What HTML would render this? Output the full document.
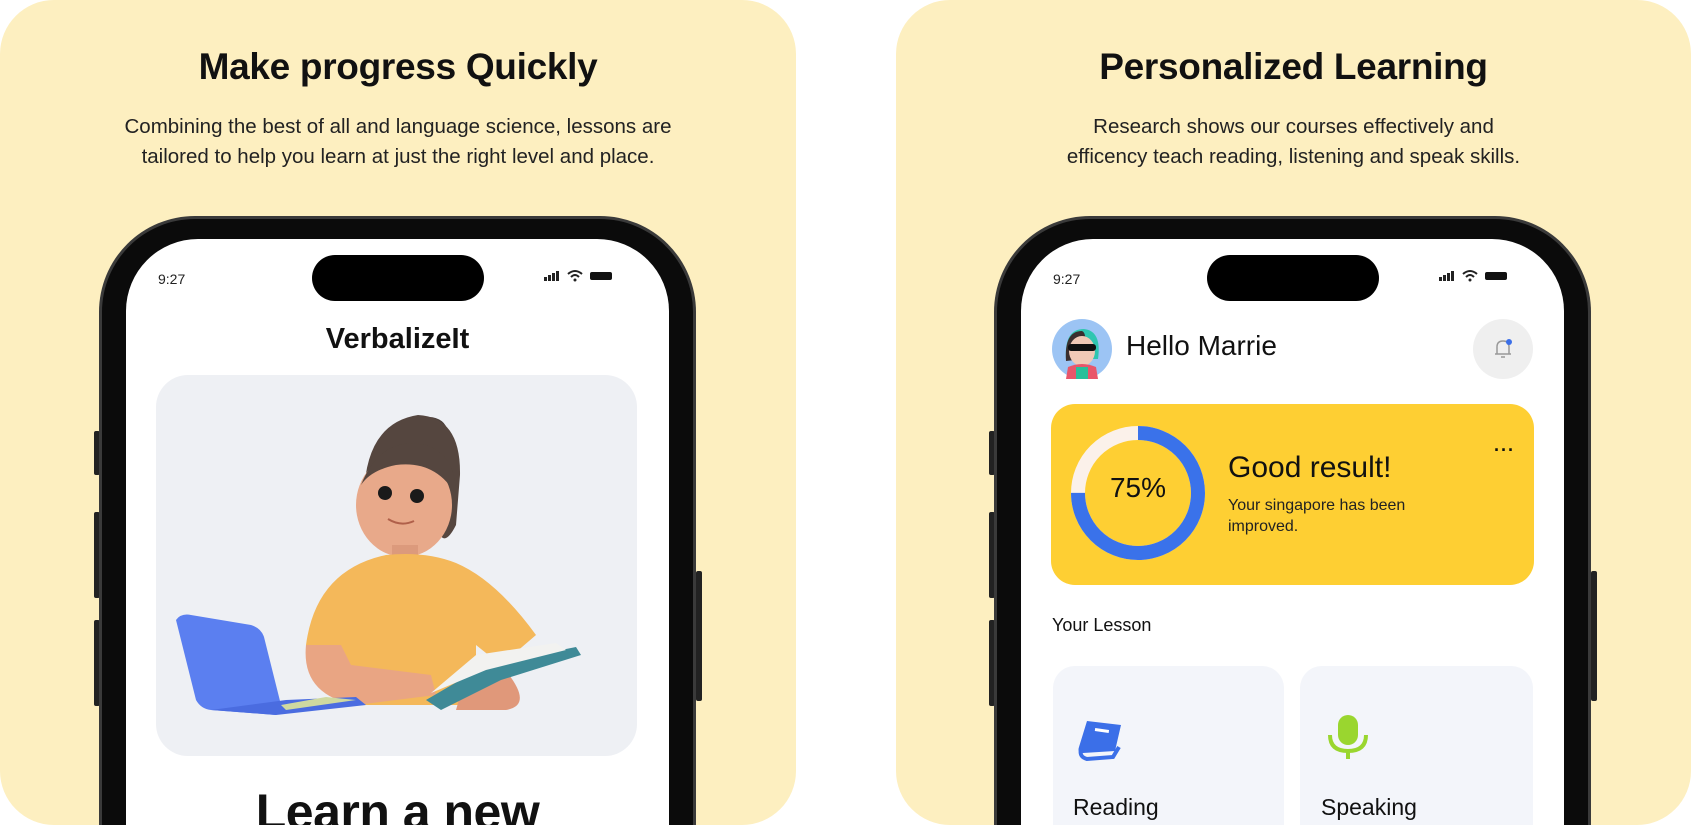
<!DOCTYPE html>
<html style="width:1691px;height:825px;overflow:hidden"><head><meta charset="utf-8"><style>
*{margin:0;padding:0;box-sizing:border-box}
body{width:1691px;height:825px;background:#fff;position:relative;overflow:hidden;font-family:"Liberation Sans",sans-serif;color:#111}
.abs{position:absolute}
.card{position:absolute;top:0;height:825px;background:#fdefc0;border-radius:54px;overflow:hidden}
.title{position:absolute;width:100%;text-align:center;top:46px;font-size:37px;font-weight:bold;letter-spacing:-0.3px}
.sub{position:absolute;width:100%;text-align:center;top:112px;font-size:20.5px;line-height:30px;color:#222}
.phone{position:absolute;top:216px;width:597px;height:609px;background:#0b0b0b;border-radius:96px 96px 0 0;border:3px solid #3a3a3a;border-bottom:none;overflow:hidden}
.screen{position:absolute;left:24px;top:20px;width:543px;height:586px;background:#fff;border-radius:72px 72px 0 0;overflow:hidden}
.island{position:absolute;left:186px;top:16px;width:172px;height:46px;background:#000;border-radius:23px}
.time{position:absolute;left:32px;top:32px;font-size:14px;color:#222}
.btn{position:absolute;background:#222;width:6px;border-radius:2px}
</style></head><body>

<div class="card" style="left:0;width:796px">
  <div class="title">Make progress Quickly</div>
  <div class="sub">Combining the best of all and language science, lessons are<br>tailored to help you learn at just the right level and place.</div>
  <div class="btn" style="left:94px;top:431px;height:44px"></div>
  <div class="btn" style="left:94px;top:512px;height:86px"></div>
  <div class="btn" style="left:94px;top:620px;height:86px"></div>
  <div class="btn" style="left:696px;top:571px;height:130px"></div>
  <div class="phone" style="left:99px">
    <div class="screen">
      <div class="island"></div>
      <div class="time">9:27</div>
      <svg class="abs" style="left:418px;top:30px" width="70" height="14"><rect x="0" y="8" width="3" height="4" fill="#222"/><rect x="4" y="6" width="3" height="6" fill="#222"/><rect x="8" y="4" width="3" height="8" fill="#222"/><rect x="12" y="2" width="3" height="10" fill="#222"/><path d="M24 5 Q31 -1 38 5 M27 8 Q31 4 35 8" stroke="#222" stroke-width="2" fill="none"/><circle cx="31" cy="11" r="1.5" fill="#222"/><rect x="46" y="3" width="22" height="8" rx="2" fill="#111"/></svg>
      <div class="abs" style="left:0;width:100%;text-align:center;top:84px;font-size:29px;font-weight:bold">VerbalizeIt</div>
      <div class="abs" style="left:30px;top:136px;width:481px;height:381px;background:#eef0f4;border-radius:32px;overflow:hidden">
        <svg width="481" height="381">
          <ellipse cx="273" cy="56" rx="18" ry="14" fill="#4a3f3a"/>
          <path d="M208 120 Q210 48 262 40 Q305 42 304 100 L300 150 Q290 170 284 160 L280 120 Z" fill="#55463f"/>
          <ellipse cx="248" cy="130" rx="48" ry="52" fill="#e8a98a"/>
          <path d="M205 110 Q225 60 270 70 Q300 80 300 120 Q280 85 240 90 Q215 95 205 110Z" fill="#55463f"/>
          <circle cx="229" cy="118" r="7" fill="#1a1a1a"/><circle cx="261" cy="121" r="7" fill="#1a1a1a"/>
          <path d="M232 144 Q245 152 258 146" stroke="#b0604a" stroke-width="2" fill="none"/>
          <rect x="236" y="170" width="26" height="20" fill="#dc9a7c"/>
          <path d="M150 270 Q160 195 230 180 Q270 176 300 188 Q340 205 380 260 L345 290 L320 270 L320 330 L180 330 L180 290 Z" fill="#f4b85a"/>
          <path d="M150 270 Q145 320 200 330 L280 320 L275 300 L195 290 L185 270 Z" fill="#e9a583"/>
          <path d="M345 290 Q380 330 350 335 L300 335 L310 300 Z" fill="#e0987a"/>
          <path d="M270 325 L330 290 L420 272 L425 280 L345 305 L285 335 Z" fill="#3f8a97"/>
          <path d="M275 318 L320 280 L400 268 L410 275 L330 295 Z" fill="#f2f2f0"/>
          <path d="M20 245 Q25 238 35 240 L95 250 Q105 253 108 262 L125 330 L120 340 L55 335 Q45 334 40 325 Z" fill="#5b7ff0"/>
          <path d="M55 335 L120 340 L210 330 L200 322 L130 325 Z" fill="#4a6ce0"/>
          <path d="M125 330 L170 322 L200 325 L130 335Z" fill="#cfd9a0"/>
        </svg>
      </div>
      <div class="abs" style="left:0;width:100%;text-align:center;top:548px;font-size:50px;line-height:50px;font-weight:bold;letter-spacing:-0.5px">Learn a new</div>
    </div>
  </div>
</div>

<div class="card" style="left:896px;width:795px">
  <div class="title">Personalized Learning</div>
  <div class="sub">Research shows our courses effectively and<br>efficency teach reading, listening and speak skills.</div>
  <div class="btn" style="left:93px;top:431px;height:44px"></div>
  <div class="btn" style="left:93px;top:512px;height:86px"></div>
  <div class="btn" style="left:93px;top:620px;height:86px"></div>
  <div class="btn" style="left:695px;top:571px;height:130px"></div>
  <div class="phone" style="left:98px">
    <div class="screen">
      <div class="island"></div>
      <div class="time">9:27</div>
      <svg class="abs" style="left:418px;top:30px" width="70" height="14"><rect x="0" y="8" width="3" height="4" fill="#222"/><rect x="4" y="6" width="3" height="6" fill="#222"/><rect x="8" y="4" width="3" height="8" fill="#222"/><rect x="12" y="2" width="3" height="10" fill="#222"/><path d="M24 5 Q31 -1 38 5 M27 8 Q31 4 35 8" stroke="#222" stroke-width="2" fill="none"/><circle cx="31" cy="11" r="1.5" fill="#222"/><rect x="46" y="3" width="22" height="8" rx="2" fill="#111"/></svg>
      <svg class="abs" style="left:31px;top:80px" width="60" height="60">
        <circle cx="30" cy="30" r="30" fill="#9cc4f4"/>
        <path d="M14 40 Q12 10 32 10 Q50 12 46 40Z" fill="#2fc6b0"/>
        <path d="M14 42 Q12 12 30 12 Q36 14 32 40Z" fill="#3a2e2e"/>
        <ellipse cx="30" cy="32" rx="13" ry="15" fill="#f1c9b6"/>
        <rect x="16" y="25" width="28" height="7" rx="3" fill="#111"/>
        <path d="M14 60 L16 48 Q30 42 44 48 L46 60Z" fill="#e8566a"/>
        <rect x="24" y="48" width="12" height="12" fill="#27c09a"/>
      </svg>
      <div class="abs" style="left:105px;top:91px;font-size:28px">Hello Marrie</div>
      <div class="abs" style="left:452px;top:80px;width:60px;height:60px;border-radius:50%;background:#efefef"></div>
      <svg class="abs" style="left:470px;top:98px" width="24" height="24"><path d="M6 17 L6 10 Q6 4 12 4 Q18 4 18 10 L18 17 Z M4 17 L20 17 M10 20 L14 20" stroke="#999" stroke-width="1.5" fill="none"/><circle cx="18" cy="5" r="3" fill="#3b6fe8"/></svg>
      <div class="abs" style="left:30px;top:165px;width:483px;height:181px;background:#fecf33;border-radius:24px">
        <svg class="abs" style="left:18px;top:20px" width="138" height="138">
          <circle cx="69" cy="69" r="60" fill="none" stroke="#fbf1ea" stroke-width="14"/>
          <circle cx="69" cy="69" r="60" fill="none" stroke="#3a72ea" stroke-width="14" stroke-dasharray="282.7 377" transform="rotate(-90 69 69)"/>
        </svg>
        <div class="abs" style="left:18px;top:68px;width:138px;text-align:center;font-size:28px">75%</div>
        <div class="abs" style="left:177px;top:47px;font-size:30px">Good result!</div>
        <div class="abs" style="left:177px;top:91px;font-size:16px;line-height:21px;color:#222">Your singapore has been<br>improved.</div>
        <div class="abs" style="left:443px;top:36px;font-size:18px;font-weight:bold;letter-spacing:1px">···</div>
      </div>
      <div class="abs" style="left:31px;top:376px;font-size:18px">Your Lesson</div>
      <div class="abs" style="left:32px;top:427px;width:231px;height:200px;background:#f3f5fa;border-radius:22px 22px 0 0"></div>
      <div class="abs" style="left:279px;top:427px;width:233px;height:200px;background:#f3f5fa;border-radius:22px 22px 0 0"></div>
      <svg class="abs" style="left:54px;top:478px" width="52" height="46"><path d="M12 4 L46 8 L40 34 L8 36 Q2 36 4 30 Z" fill="#3b6fe8"/><path d="M6 32 Q4 40 12 42 L38 40 L44 30" stroke="#3b6fe8" stroke-width="4" fill="none"/><rect x="20" y="12" width="14" height="3" fill="#fff" transform="rotate(8 27 13)"/></svg>
      <svg class="abs" style="left:305px;top:474px" width="44" height="48"><rect x="12" y="2" width="20" height="30" rx="10" fill="#9ad62f"/><path d="M4 22 Q4 38 22 38 Q40 38 40 22" stroke="#9ad62f" stroke-width="4" fill="none"/><rect x="20" y="38" width="4" height="8" fill="#9ad62f"/></svg>
      <div class="abs" style="left:52px;top:555px;font-size:23px">Reading</div>
      <div class="abs" style="left:300px;top:555px;font-size:23px">Speaking</div>
    </div>
  </div>
</div>
</body></html>
